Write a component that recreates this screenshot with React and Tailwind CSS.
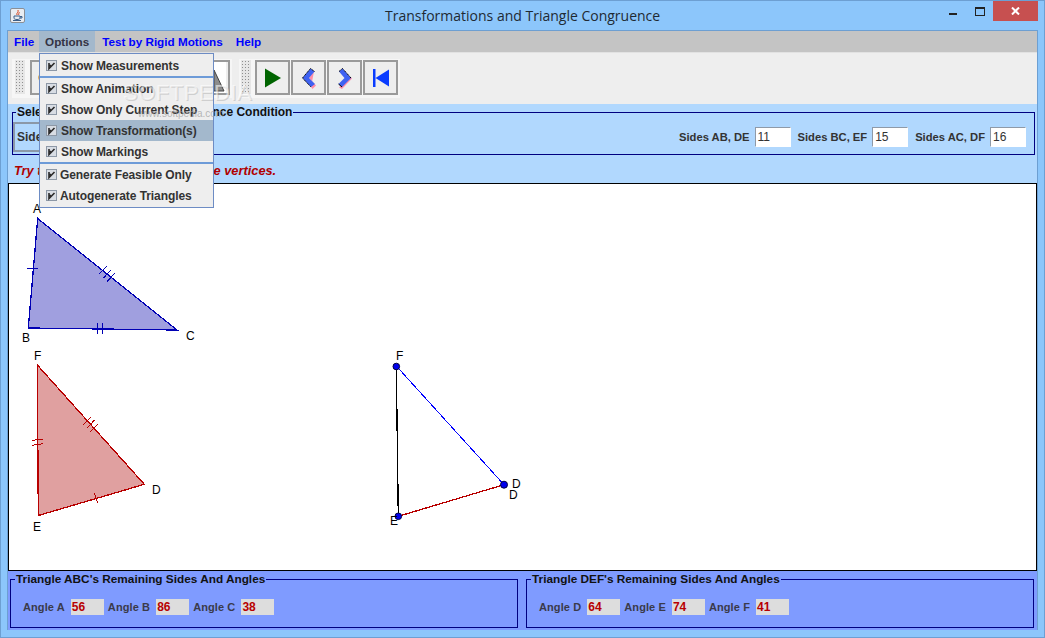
const menuItems = [
  [
    { label: "Show Measurements" },
  ],
  [
    { label: "Show Animation" },
    { label: "Show Only Current Step" },
    { label: "Show Transformation(s)", active: true },
    { label: "Show Markings" },
  ],
  [
    { label: "Generate Feasible Only", tight: true },
    { label: "Autogenerate Triangles", tight: true },
  ],
];

function Check() {
  return (
    <svg width="11" height="11" viewBox="0 0 11 11" className="shrink-0">
      <rect x="0.5" y="0.5" width="10" height="10" fill="#d8dde4" stroke="#8d98a6" />
      <path d="M3 3v5.5L8.5 3M3 5.5h2" fill="none" stroke="#2a2a2a" strokeWidth="1.6" />
    </svg>
  );
}

function OptionsMenu() {
  return (
    <div className="absolute left-[38px] top-[52px] w-[175px] border border-[#6d8cc4] bg-[#eeeeee] pt-px pb-px text-[12px] font-bold text-[#333333]">
      {menuItems.map((group, i) => (
        <div key={i} className={i > 0 ? "border-t-2 border-t-[#6d9bd8]" : ""}>
          {group.map((item) => (
            <div
              key={item.label}
              className={
                "flex h-[21px] items-center pl-[6px] " +
                (item.tight ? "gap-[3px] " : "gap-[4px] ") +
                (item.active ? "bg-[#a3b8cc]" : "")
              }
            >
              <Check />
              <span className="tracking-[-0.08px]">{item.label}</span>
            </div>
          ))}
        </div>
      ))}
    </div>
  );
}

function Grip() {
  return <div className="h-[34px] w-[10px] shrink-0 bg-[#e6e6e6] bg-[radial-gradient(#8f8f8f_0.6px,transparent_0.7px)] bg-[length:3px_3px]" />;
}

function ToolButton({ children }) {
  return (
    <div className="flex h-[35px] w-[35px] items-center justify-center border-2 border-[#9a9a9a] bg-[#eeeeee]">
      {children}
    </div>
  );
}

function Toolbar() {
  return (
    <div className="flex h-[52px] gap-[7px] border-t border-t-[#e2e2e2] bg-[#eeeeee] pl-[4px] pt-[6px]">
      <div className="flex h-[39px] w-[220px] items-start gap-[5px] bg-[#f6f6f6] pl-[3px] pt-px">
        <Grip />
        <div className="flex h-[35px] w-[200px] items-center justify-between border-2 border-[#9a9a9a] bg-[#eeeeee] pl-[6px] pr-[2px] text-[13px] text-[#333333]">
          <span>C</span>
          <div className="flex h-full w-[14px] items-end bg-white">
            <svg width="14" height="26" viewBox="0 0 14 26">
              <path d="M2 3L12 24H2Z" fill="#8c8c8c" stroke="#444444" />
            </svg>
          </div>
        </div>
      </div>
      <div className="flex h-[39px] w-[161px] items-start gap-px bg-[#f6f6f6] pl-[2px] pt-px">
        <Grip />
        <div className="ml-[3px] flex gap-px">
          <ToolButton>
            <svg width="18" height="20" viewBox="0 0 18 20">
              <path d="M1 0.5L17 10L1 19.5Z" fill="#006400" />
            </svg>
          </ToolButton>
          <ToolButton>
            <svg width="16" height="22" viewBox="0 0 16 22">
              <path d="M13 4.5L8 11L15 18.5L11.5 22L10 20Z" fill="#ff8fa8" />
              <path d="M9.5 1.5L1.5 11L10 20L14 17L8 11L13.5 4.5Z" fill="#3f62f2" />
              <path d="M13.5 4.5L9.5 1.5L1.5 11L10 20" fill="none" stroke="#000000" strokeWidth="1" strokeDasharray="1.4 0.6" />
            </svg>
          </ToolButton>
          <ToolButton>
            <svg width="16" height="22" viewBox="0 0 16 22">
              <path d="M2 20.5L5 22L15 11.5L13.5 10Z" fill="#ff8fa8" />
              <path d="M5.5 1.5L14 11L5 20L1.5 17L7.5 11L2 4.5Z" fill="#3f62f2" />
              <path d="M2 4.5L5.5 1.5L14 11" fill="none" stroke="#000000" strokeWidth="1" strokeDasharray="1.4 0.6" />
              <path d="M1.5 17L5 20" fill="none" stroke="#000000" strokeWidth="1" />
            </svg>
          </ToolButton>
          <ToolButton>
            <svg width="18" height="20" viewBox="0 0 18 20">
              <path d="M1 1h2.5v18H1zM3.5 10L17 1.5V18.5Z" fill="#0a3cff" />
            </svg>
          </ToolButton>
        </div>
      </div>
    </div>
  );
}

function SideField({ label, value }) {
  return (
    <div className="flex items-center gap-[5px]">
      <span className="text-[11.2px] font-bold text-[#333333]">{label}</span>
      <div className="flex h-[20px] w-[36px] items-center border border-[#8f9aa8] border-r-white border-b-white bg-white pl-[2px] text-[12px] font-normal text-[#333333]">
        {value}
      </div>
    </div>
  );
}

function AngleField({ label, value }) {
  return (
    <div className="flex items-center gap-[6px]">
      <span className="text-[11px] tracking-[0.1px] text-[#3a3a4a]">{label}</span>
      <div className="flex h-[16px] w-[33px] items-center bg-[#dddddd] pl-[1px] text-[#b80000]">{value}</div>
    </div>
  );
}

function AngleGroup({ title, items, className }) {
  return (
    <fieldset className={"border border-[#000080] px-[4px] pb-[11px] pt-[13px] " + className}>
      <legend className="px-[1px] text-[11.8px] leading-[14px] font-bold text-[#111111]">{title}</legend>
      <div className="flex gap-[4px] pl-[8px] text-[12px] font-bold">
        {items.map(([label, value]) => (
          <AngleField key={label} label={label} value={value} />
        ))}
      </div>
    </fieldset>
  );
}

function Canvas() {
  const labelProps = { fontSize: 12, fill: "#000000", fontFamily: "Liberation Sans, Arial, sans-serif" };
  const blue = "#0000b4";
  const red = "#b80000";
  return (
    <div className="h-[388px] border border-black bg-white">
      <svg className="block h-[386px] w-[1027px]" viewBox="9 184 1027 386">
        <g stroke={blue} strokeWidth="1.3" shapeRendering="crispEdges">
          <path d="M37.7 218.5L28.3 328L177 330Z" fill="#a09fdf" />
          <path d="M27.3 268H37.7M97.7 323V333.7M102 323V333.7M99 274.3L106.7 266M103.3 278.3L110.7 270M107 281.7L114.7 273.3" fill="none" strokeWidth="1" />
        </g>
        <g stroke={red} strokeWidth="1.3" shapeRendering="crispEdges">
          <path d="M37.3 365L38.3 515.5L144.3 484.3Z" fill="#e0a0a0" />
          <path d="M32 440.3L43 439.3M32 445.3L43 443.7M83.3 425L90.7 417M86.7 428.3L94.3 420.3M90.3 431.7L98 424M94.3 493.3L97.7 502.7" fill="none" strokeWidth="1" />
        </g>
        <g shapeRendering="crispEdges">
          <path d="M396.3 366L398.3 516.3" stroke="#000000" strokeWidth="1.3" />
          <path d="M396.3 366L504 484.7" stroke="#0000ff" strokeWidth="1" />
          <path d="M398.3 516.3L504 484.7" stroke={red} strokeWidth="1.3" />
        </g>
        <circle cx="396.3" cy="366.5" r="3.3" fill="#0000ee" stroke="#000040" />
        <circle cx="398.3" cy="516.3" r="3.3" fill="#0000ee" stroke="#000040" />
        <circle cx="504" cy="484.7" r="3.5" fill="#0000ee" stroke="#000040" />
        <text x="33" y="213" {...labelProps}>A</text>
        <text x="22" y="341.5" {...labelProps}>B</text>
        <text x="186" y="340" {...labelProps}>C</text>
        <text x="34" y="360" {...labelProps}>F</text>
        <text x="152" y="494" {...labelProps}>D</text>
        <text x="33" y="531" {...labelProps}>E</text>
        <text x="396" y="360" {...labelProps}>F</text>
        <text x="512" y="488" {...labelProps}>D</text>
        <text x="509" y="499" {...labelProps}>D</text>
        <text x="390" y="525" {...labelProps}>E</text>
      </svg>
    </div>
  );
}

function JavaIcon() {
  return (
    <div className="flex h-[15px] w-[15px] items-center justify-center rounded-[2px] border border-[#8a8f96] bg-[#e9edf2]">
      <svg width="11" height="12" viewBox="0 0 11 12">
        <path d="M6 0C7 2 4 3 5 5M7.5 2C6.5 3 7 4 6.5 5" fill="none" stroke="#d8441c" strokeWidth="1" />
        <path d="M2 6H8V8C8 9 7 9.5 5 9.5C3 9.5 2 9 2 8ZM8 6.5H10V8H8M1 10.5H9" fill="none" stroke="#3a5f8a" strokeWidth="1" />
      </svg>
    </div>
  );
}

export default function App() {
  return (
    <div className="relative h-[638px] w-[1045px] overflow-hidden border border-[#6d9fd2] bg-[#8cc6fb] font-['Liberation_Sans',Arial,sans-serif]">
      <div className="relative flex h-[29px] items-start">
        <div className="ml-[9px] mt-[7px]">
          <JavaIcon />
        </div>
        <div className="ml-[360px] mt-[4px] font-['Open_Sans',sans-serif] text-[14px] leading-[22px] text-[#1f2a33]">
          Transformations and Triangle Congruence
        </div>
        <div className="ml-auto mr-[6px] flex items-start">
          <div className="mr-[18px] mt-[12px] h-[2px] w-[8px] bg-[#222222]" />
          <div className="mr-[8px] mt-[6px] h-[9px] w-[10px] border border-t-2 border-[#222222]" />
          <div className="flex h-[20px] w-[45px] items-center justify-center bg-[#c75050]">
            <svg width="9" height="8" viewBox="0 0 9 8">
              <path d="M1 0.5L8 7.5M8 0.5L1 7.5" stroke="#ffffff" strokeWidth="2" />
            </svg>
          </div>
        </div>
      </div>

      <div className="mx-[6px] h-[600px] border border-[#6d9fd2] bg-[#b1d8fe]">
        <div className="flex h-[21px] items-center bg-[#c4c4c4] pl-[1px] text-[11.7px] font-bold text-[#0000ff]">
          <span className="px-[5px]">File</span>
          <span className="flex h-full w-[56px] items-center justify-center bg-[#a3b8cc] text-[#333344]">Options</span>
          <span className="ml-[7px]">Test by Rigid Motions</span>
          <span className="ml-[13px]">Help</span>
        </div>
        <Toolbar />

        <div className="pt-px">
          <fieldset className="ml-[4px] mr-[2px] border border-[#000080] pb-[2px] pt-[3px]">
            <legend className="ml-[3px] px-[1px] text-[12px] leading-[14px] font-bold text-[#111111]">
              Select Triangle Sides For Congruence Condition
            </legend>
            <div className="flex h-[30px] items-center justify-between pr-[8px] text-[12px]">
              <div className="flex h-full w-[120px] items-center border-2 border-[#8b98a8] pl-[2px] font-bold text-[#333333]">
                Sides
              </div>
              <div className="flex gap-[7px]">
                <SideField label="Sides AB, DE" value="11" />
                <SideField label="Sides BC, EF" value="15" />
                <SideField label="Sides AC, DF" value="16" />
              </div>
            </div>
          </fieldset>
          <div className="h-[28px] pl-[6px] pt-[9px] text-[12.8px] leading-[14px] font-bold italic text-[#b00000]">
            Try to form a triangle by using the vertices.
          </div>
        </div>

        <Canvas />

        <div className="flex h-[59px] items-start gap-[8px] bg-[#7f9bff] pl-[2px] pr-[2px] pt-px">
          <AngleGroup
            title="Triangle ABC's Remaining Sides And Angles"
            items={[["Angle A", "56"], ["Angle B", "86"], ["Angle C", "38"]]}
            className="w-[508px]"
          />
          <AngleGroup
            title="Triangle DEF's Remaining Sides And Angles"
            items={[["Angle D", "64"], ["Angle E", "74"], ["Angle F", "41"]]}
            className="w-[508px]"
          />
        </div>
      </div>

      <OptionsMenu />
      <div className="pointer-events-none absolute left-[122px] top-[75px] text-[22px] tracking-[0.5px] text-white/55 [text-shadow:1px_1px_0_rgba(110,110,110,0.25)]">
        SOFTPEDIA
      </div>
      <div className="pointer-events-none absolute left-[137px] top-[105px] text-[10px] text-[#9a9a9a]/70">
        www.softpedia.com
      </div>
    </div>
  );
}
